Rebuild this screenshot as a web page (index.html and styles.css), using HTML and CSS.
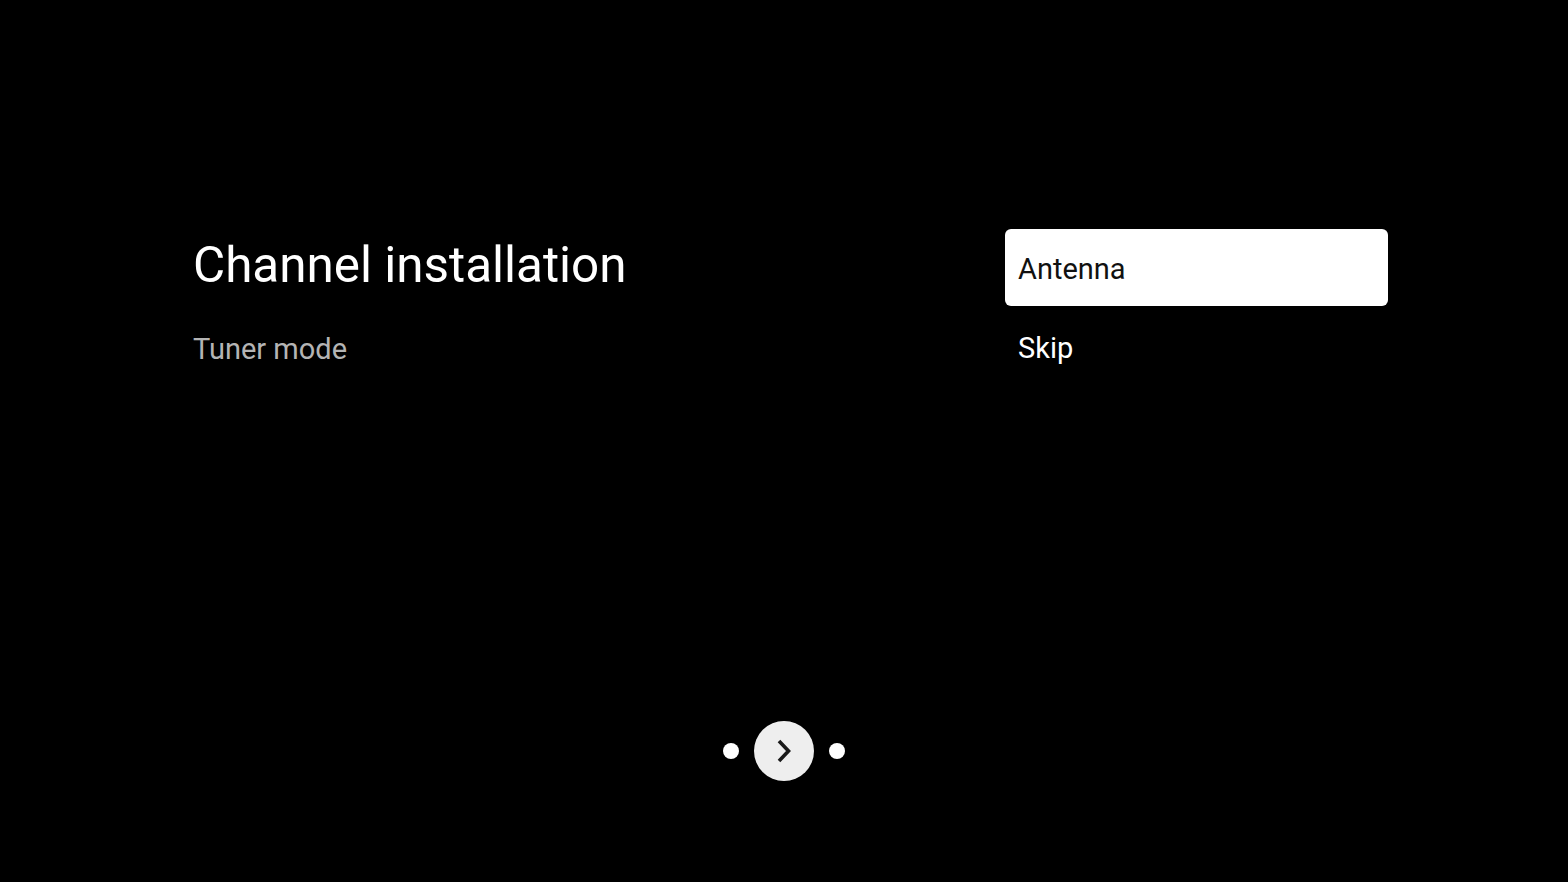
FILE: index.html
```html
<!DOCTYPE html>
<html lang="en">
<head>
<meta charset="UTF-8">
<meta name="viewport" content="width=device-width, initial-scale=1.0">
<title>Channel installation</title>
<link rel="stylesheet" href="styles.css">
</head>
<body>
<div class="screen">
    <div class="content">
        <div class="intro">
            <h1>Channel installation</h1>
            <p class="subtitle">Tuner mode</p>
        </div>
        <ul class="options">
            <li class="option selected">Antenna</li>
            <li class="option">Skip</li>
        </ul>
    </div>
    <div class="pager">
        <span class="dot"></span>
        <button class="next" aria-label="Next">
            <svg width="30" height="30" viewBox="0 0 30 30"><path d="M10 5l9.5 10L10 25" fill="none" stroke="#1a1a1a" stroke-width="3.6"/></svg>
        </button>
        <span class="dot"></span>
    </div>
</div>
</body>
</html>
```

FILE: styles.css
```css
body {
    margin: 0;
    background: #000;
    font-family: Roboto, "Liberation Sans", sans-serif;
    color: #fff;
}
.screen {
    height: 882px;
    display: flex;
    flex-direction: column;
}
.content {
    display: flex;
    justify-content: space-between;
    padding: 229px 180px 0 193px;
    flex: 1;
}
h1 {
    font-size: 49.4px;
    font-weight: 400;
    margin: 6px 0 0;
    line-height: 60px;
}
.subtitle {
    font-size: 29px;
    color: #b4b4b4;
    margin: 37px 0 0;
    line-height: 34px;
}
.options {
    list-style: none;
    margin: 0;
    padding: 0;
    width: 383px;
}
.option {
    font-size: 29px;
    padding-left: 13px;
    border-radius: 6px;
}
.option.selected {
    background: #fff;
    color: #111;
    height: 77px;
    line-height: 80px;
}
.option + .option {
    height: 40px;
    line-height: 40px;
    margin-top: 22px;
}
.pager {
    display: flex;
    justify-content: center;
    align-items: center;
    gap: 15px;
    padding-bottom: 101px;
}
.dot {
    width: 16px;
    height: 16px;
    border-radius: 50%;
    background: #fff;
}
.next {
    width: 60px;
    height: 60px;
    border-radius: 50%;
    border: none;
    background: #eee;
    display: flex;
    align-items: center;
    justify-content: center;
    padding: 0;
}
```
